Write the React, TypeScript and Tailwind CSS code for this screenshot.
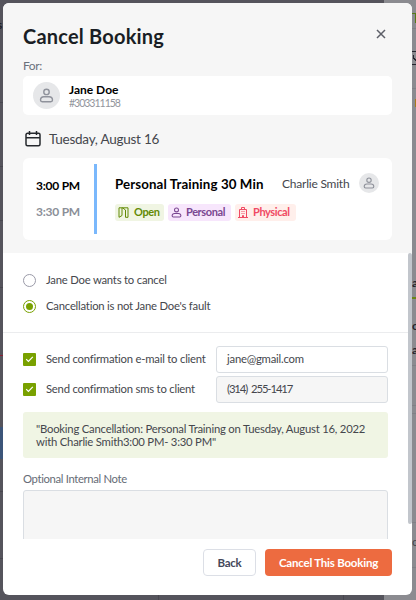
import type { ReactNode } from 'react';

function UserIcon({ className }: { className: string }) {
  return (
    <svg className={className} viewBox="0 0 16 16" fill="none" stroke="currentColor" strokeWidth="1.5">
      <circle cx="8" cy="4.2" r="2.9" />
      <path d="M5.2 9.3h5.6a3.6 3.6 0 0 1 3.6 3.5c0 1.1-.7 1.8-1.8 1.8H3.4c-1.1 0-1.8-.7-1.8-1.8a3.6 3.6 0 0 1 3.6-3.5z" />
    </svg>
  );
}

function Tag({ className, icon, children }: { className: string; icon: ReactNode; children: ReactNode }) {
  return (
    <span className={`flex h-[17px] items-center rounded-[3px] pl-[3px] text-[11px] font-bold tracking-[-0.4px] ${className}`}>
      {icon}
      {children}
    </span>
  );
}

function Radio({ checked, label }: { checked?: boolean; label: string }) {
  return (
    <label className="flex h-[14px] items-center gap-[10px]">
      <span
        className={`flex size-[13px] items-center justify-center rounded-full border ${checked ? 'border-[#79a100]' : 'border-[#9a9aa8]'}`}
      >
        {checked && <span className="size-[7px] rounded-full bg-[#79a100]" />}
      </span>
      {label}
    </label>
  );
}

function CheckRow({ label, value, inputClass }: { label: string; value: string; inputClass: string }) {
  return (
    <div className="flex h-[26px] items-center">
      <span className="flex size-[13px] items-center justify-center rounded-[1px] bg-[#79a100]">
        <svg className="size-[9px]" viewBox="0 0 9 9" fill="none" stroke="#fff" strokeWidth="1.2">
          <path d="M1.2 4.2l2.2 2.2L7.8 1.8" />
        </svg>
      </span>
      <span className="ml-[10px] w-[170px] pt-px whitespace-nowrap">{label}</span>
      <div className={`flex h-[27px] flex-1 items-center rounded-[3px] border border-[#dadee3] pl-[10px] ${inputClass}`}>
        {value}
      </div>
    </div>
  );
}

// Slivers of the dimmed calendar page that stay visible around the dialog
function Backdrop() {
  return (
    <svg className="absolute inset-0" width="416" height="600" shapeRendering="crispEdges">
      <rect width="416" height="600" fill="#55545c" />
      <rect x="384" width="32" height="600" fill="#8b8b90" />
      <path d="M0 102.5h4M0 166.5h4M0 220.5h4M0 287.5h4M0 491.5h4M0 558.5h4M158.5 594v6M343.5 594v6" stroke="#48474f" />
      <path d="M412 28.5h4M412 88.5h4M412 365.5h4M412 405.5h4M412 413.5h4M412 522.5h4M412 567.5h4" stroke="#808086" />
      <rect y="427" width="4" height="32" fill="#3c5579" />
      <rect y="355" width="4" height="1" fill="#8a1f35" />
      <path d="M412 13.5h4M415.5 13v10" stroke="#567a17" />
      <rect x="415" y="99" width="1" height="8" fill="#a87a1c" />
      <rect x="412" y="297" width="4" height="2" fill="#6c8417" />
      <path d="M412 51.5h4M412 64.5h4M413.5 55v3l3 3" fill="none" stroke="#25252e" strokeWidth="1.2" />
    </svg>
  );
}

export default function App() {
  return (
    <div className="relative h-[600px] w-[416px] overflow-hidden font-['Lato',sans-serif] text-[11.3px] tracking-[-0.22px] text-[#45474d]">
      <Backdrop />
      <div className="absolute top-[16px] -left-[3px] text-[12px] font-bold text-[#1d1d24]">s</div>
      <div className="absolute top-[274px] left-[412px] text-[12px] font-bold text-[#25252e]">a</div>
      <div className="absolute top-[317px] left-[412px] text-[12px] font-bold text-[#25252e]">o</div>
      <div className="absolute top-[341px] left-[412px] text-[12px] font-bold text-[#25252e]">a</div>
      <div className="absolute top-[533px] left-[412px] text-[12px] text-[#45454d]">o</div>

      <div className="absolute top-[3px] left-[3px] flex h-[592px] w-[409px] flex-col overflow-hidden rounded-[6px] bg-white">
        <header className="h-[250px] shrink-0 bg-[#f6f6f6] px-5 pt-[22px]">
          <div className="flex h-[22px] items-center justify-between">
            <h1 className="text-[20px] font-bold tracking-[0.2px] text-[#1a1e24]">Cancel Booking</h1>
            <svg className="mt-[-4px] mr-[6px] size-[10px]" viewBox="0 0 10 10" stroke="#5d5f68" strokeWidth="1.5">
              <path d="M1 1l8 8M9 1L1 9" />
            </svg>
          </div>
          <div className="mt-[11px] h-[18px] text-[12px] leading-[15px] tracking-[-0.4px] text-[#6a717b]">For:</div>
          <div className="flex h-[39px] items-center rounded-[5px] bg-white pl-[10px]">
            <span className="flex size-[27px] items-center justify-center rounded-full bg-[#e6e7e9] text-[#8f929b]">
              <UserIcon className="size-[15px]" />
            </span>
            <div className="ml-[9px]">
              <div className="text-[12px] leading-[14px] font-bold tracking-normal text-black">Jane Doe</div>
              <div className="text-[10.5px] leading-[12px] tracking-[-1px] text-[#92959c]">#303311158</div>
            </div>
          </div>
          <div className="mt-[14px] flex h-[20px] items-center text-[13.5px] tracking-[-0.25px]">
            <svg className="mt-[-1px] ml-[2px] size-4" viewBox="0 0 16 16" fill="none" stroke="#25282d" strokeWidth="1.5">
              <rect x="1" y="2.3" width="14" height="12.5" rx="1.5" />
              <path d="M1 6.8h14M4.5 0v4M11.5 0v4" />
            </svg>
            <span className="ml-[8px]">Tuesday, August 16</span>
          </div>
          <div className="mt-[9px] flex h-[82px] rounded-[6px] bg-white py-[6px] pl-[13px]">
            <div className="w-[58px] pt-[14px] text-[12px] leading-[16px] font-bold tracking-[-0.25px]">
              <div className="text-black">3:00 PM</div>
              <div className="mt-[10px] text-[#8b8f98]">3:30 PM</div>
            </div>
            <div className="w-[3px] bg-[#7ab8fc]" />
            <div className="ml-[18px] flex-1">
              <div className="flex h-[38px] items-center">
                <span className="w-[167px] pt-[3px] text-[13.3px] font-bold tracking-[0.1px] whitespace-nowrap text-black">
                  Personal Training 30 Min
                </span>
                <span className="w-[77px] pt-px text-[12px] whitespace-nowrap">Charlie Smith</span>
                <span className="flex size-[20px] items-center justify-center rounded-full bg-[#e6e7e9] text-[#8f929b]">
                  <UserIcon className="size-3" />
                </span>
              </div>
              <div className="mt-[2px] flex gap-1">
                <Tag
                  className="w-[49px] bg-[#f0f5e3] text-[#638a05]"
                  icon={
                    <svg className="mr-[5px] size-[11px]" viewBox="0 0 11 11" fill="none" stroke="currentColor">
                      <path d="M1 .8h3v7.7L1 10.3zM4 .8h6v9.5H7.5V3L4.5 .8" />
                    </svg>
                  }
                >
                  Open
                </Tag>
                <Tag className="w-[63px] bg-[#f7e6fc] text-[#7a4791]" icon={<UserIcon className="mr-[4px] size-[11px]" />}>
                  Personal
                </Tag>
                <Tag
                  className="w-[61px] bg-[#ffefeb] text-[#f04a63]"
                  icon={
                    <svg className="mr-[4px] size-[11px]" viewBox="0 0 11 11" fill="none" stroke="currentColor">
                      <path d="M1.5 10.5v-8h7v8M0 10.5h10M3.5 2.5v-2h3v2M3.5 4.5h1M5.5 4.5h1M3.5 6.5h1M5.5 6.5h1M4.5 10.5v-2h1v2" />
                    </svg>
                  }
                >
                  Physical
                </Tag>
              </div>
            </div>
          </div>
        </header>

        <div className="relative h-[286px] shrink-0 overflow-hidden">
          <div className="flex flex-col gap-[12px] border-b border-[#ebecee] px-5 pt-[20px] pb-[19px]">
            <Radio label="Jane Doe wants to cancel" />
            <Radio checked label="Cancellation is not Jane Doe's fault" />
          </div>
          <div className="mr-[24px] ml-5">
            <div className="flex flex-col gap-1 pt-[13px]">
              <CheckRow label="Send confirmation e-mail to client" value="jane@gmail.com" inputClass="bg-white" />
              <CheckRow
                label="Send confirmation sms to client"
                value="(314) 255-1417"
                inputClass="bg-[#f6f6f6] tracking-[-1.1px] [word-spacing:2px]"
              />
            </div>
            <p className="mt-[10px] h-[46px] rounded-[3px] bg-[#f0f5e4] px-[13px] pt-[10px] leading-[13px] whitespace-nowrap">
              "Booking Cancellation: Personal Training on Tuesday, August 16, 2022
              <br />
              with Charlie Smith3:00 PM- 3:30 PM"
            </p>
            <div className="mt-[13px] h-[19px] leading-[16px] tracking-[-0.35px] text-[#666c76]">Optional Internal Note</div>
            <div className="h-[70px] rounded-[3px] border border-[#dadee3] bg-[#f6f6f6]" />
          </div>
          <div className="absolute top-0 right-0 h-[271px] w-[4px] rounded-full bg-[#c2c6cc]" />
        </div>

        <footer className="flex justify-end gap-[9px] pt-[10px] pr-[20px] text-[11.5px] font-bold">
          <button className="h-[27px] w-[53px] rounded-[4px] border border-[#dcdfe6] text-[#45485a]">Back</button>
          <button className="h-[27px] w-[127px] rounded-[4px] bg-[#ed6b40] text-white">Cancel This Booking</button>
        </footer>
      </div>
    </div>
  );
}
